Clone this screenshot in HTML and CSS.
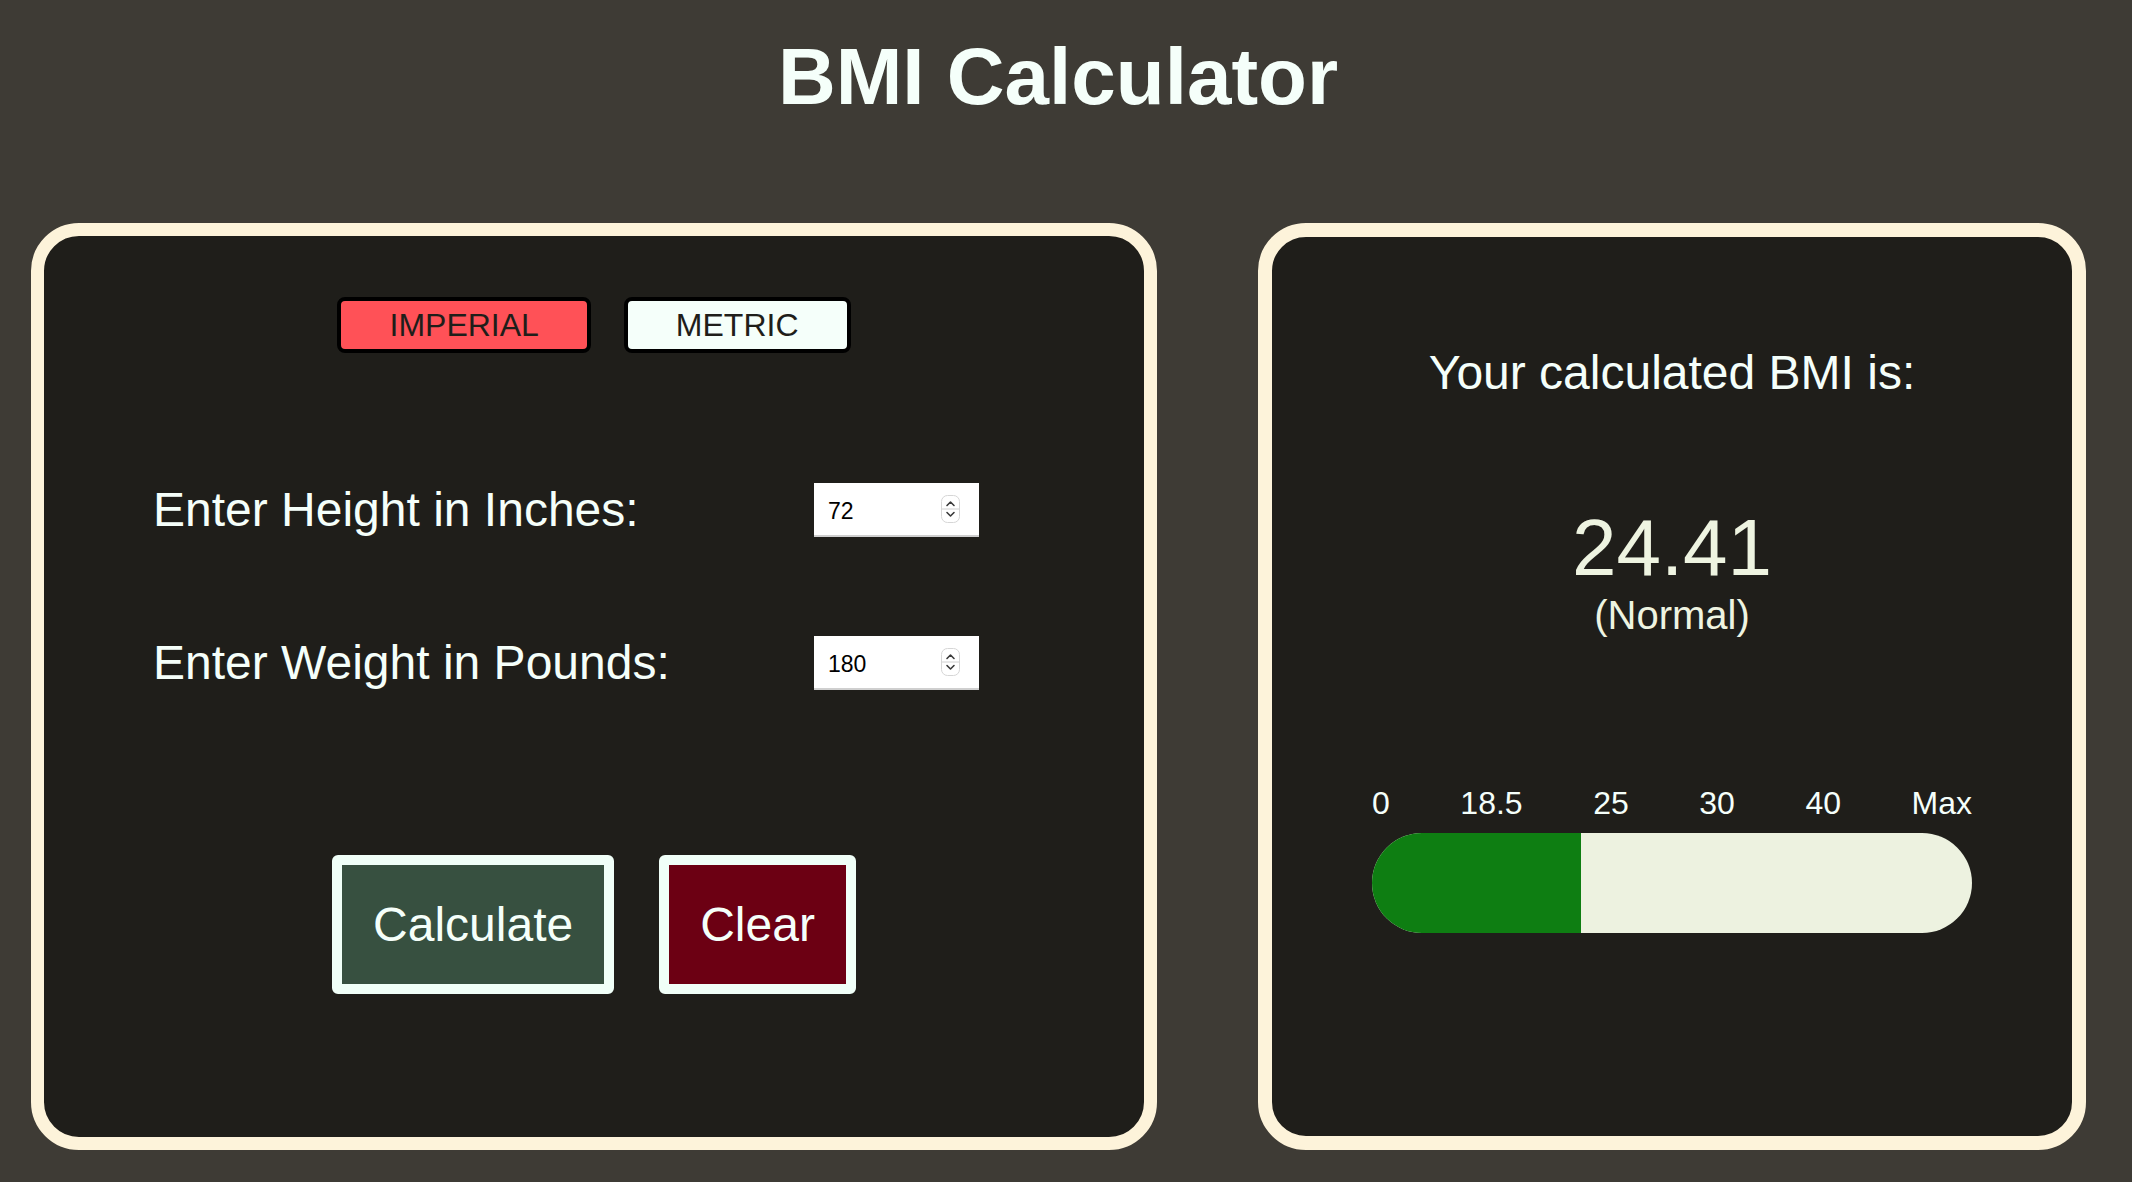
FILE: index.html
```html
<!DOCTYPE html>
<html lang="en">
<head>
<meta charset="utf-8">
<title>BMI Calculator</title>
<link rel="stylesheet" href="styles.css">
</head>
<body>
<header class="header">
  <h1 class="title">BMI Calculator</h1>
</header>
<main class="cards">
  <section class="card card-form">
    <div class="toggles">
      <button class="toggle toggle-active" type="button">IMPERIAL</button>
      <button class="toggle" type="button">METRIC</button>
    </div>
    <div class="form">
      <label class="field-label" for="h">Enter Height in Inches:</label>
      <div class="num">
        <input class="num-input" id="h" type="text" value="72">
        <svg class="spin" width="19" height="28" viewBox="0 0 19 28" aria-hidden="true">
          <rect x="0.5" y="0.5" width="18" height="27" rx="6" fill="#fff" stroke="#d6d6d6"/>
          <line x1="1" y1="14" x2="18" y2="14" stroke="#d0d0d0" stroke-width="1"/>
          <polyline points="6,10.5 9.5,7 13,10.5" fill="none" stroke="#3a3a3a" stroke-width="1.6" stroke-linecap="round" stroke-linejoin="round"/>
          <polyline points="6,17.5 9.5,21 13,17.5" fill="none" stroke="#3a3a3a" stroke-width="1.6" stroke-linecap="round" stroke-linejoin="round"/>
        </svg>
      </div>
      <label class="field-label" for="w">Enter Weight in Pounds:</label>
      <div class="num">
        <input class="num-input" id="w" type="text" value="180">
        <svg class="spin" width="19" height="28" viewBox="0 0 19 28" aria-hidden="true">
          <rect x="0.5" y="0.5" width="18" height="27" rx="6" fill="#fff" stroke="#d6d6d6"/>
          <line x1="1" y1="14" x2="18" y2="14" stroke="#d0d0d0" stroke-width="1"/>
          <polyline points="6,10.5 9.5,7 13,10.5" fill="none" stroke="#3a3a3a" stroke-width="1.6" stroke-linecap="round" stroke-linejoin="round"/>
          <polyline points="6,17.5 9.5,21 13,17.5" fill="none" stroke="#3a3a3a" stroke-width="1.6" stroke-linecap="round" stroke-linejoin="round"/>
        </svg>
      </div>
    </div>
    <div class="actions">
      <button class="action action-calc" type="button">Calculate</button>
      <button class="action action-clear" type="button">Clear</button>
    </div>
  </section>
  <section class="card card-result">
    <p class="result-caption">Your calculated BMI is:</p>
    <p class="result-value">24.41</p>
    <p class="result-class">(Normal)</p>
    <div class="scale">
      <span>0</span>
      <span>18.5</span>
      <span>25</span>
      <span>30</span>
      <span>40</span>
      <span>Max</span>
    </div>
    <div class="bar">
      <div class="bar-fill" style="width: 209px"></div>
    </div>
  </section>
</main>
</body>
</html>
```
FILE: styles.css
```css
* {
  box-sizing: border-box;
}

html, body {
  margin: 0;
  padding: 0;
}

body {
  background: #3e3b35;
  font-family: "Liberation Sans", Arial, sans-serif;
  color: #f5fffa;
  width: 2132px;
  height: 1182px;
  overflow: hidden;
}

.header {
  padding-top: 31px;
  padding-right: 16px;
  display: flex;
  justify-content: center;
}

.title {
  margin: 0;
  font-size: 80px;
  line-height: 92px;
  font-weight: 700;
  color: #f5fffa;
}

.cards {
  display: flex;
  gap: 101px;
  padding-left: 31px;
  margin-top: 100px;
}

.card {
  height: 927px;
  border: 13px solid #fdf3da;
  border-radius: 48px;
  background: #1f1e1a;
  display: flex;
  flex-direction: column;
}

.card-form {
  width: 1126px;
  padding-top: 61px;
}

.card-result {
  width: 828px;
  border-width: 14px;
  padding-top: 108px;
  align-items: center;
}

/* toggles */
.toggles {
  display: flex;
  justify-content: center;
  gap: 33px;
}

.toggle {
  height: 56px;
  padding: 0 48px;
  border: 4px solid #000;
  border-radius: 8px;
  background: #f5fffa;
  color: #1f1e1a;
  font-family: "Liberation Sans", Arial, sans-serif;
  font-size: 32px;
  line-height: 36px;
}

.toggle-active {
  background: #ff5157;
}

/* form */
.form {
  margin-top: 130px;
  margin-left: 109px;
  display: grid;
  grid-template-columns: 661px 165px;
  row-gap: 99px;
  align-items: center;
}

.field-label {
  font-size: 48px;
  line-height: 54px;
  color: #f5fffa;
}

.num {
  height: 54px;
  background: #fff;
  border-bottom: 2px solid #cfcfcf;
  display: flex;
  align-items: center;
  padding: 0 19px 0 14px;
}

.num-input {
  flex: 1;
  min-width: 0;
  border: 0;
  outline: 0;
  background: transparent;
  padding: 4px 0 0;
  font-family: "Liberation Sans", Arial, sans-serif;
  font-size: 23px;
  color: #000;
}

.spin {
  display: block;
  flex: none;
}

/* actions */
.actions {
  margin-top: 165px;
  display: flex;
  justify-content: center;
  gap: 45px;
}

.action {
  height: 139px;
  padding: 0 31px;
  border: 10px solid #f0fff8;
  border-radius: 6px;
  color: #f5fffa;
  font-family: "Liberation Sans", Arial, sans-serif;
  font-size: 48px;
  line-height: 56px;
}

.action-calc {
  background: #375040;
}

.action-clear {
  background: #6c0013;
}

/* result */
.result-caption {
  margin: 0;
  font-size: 48px;
  line-height: 56px;
  color: #f5fffa;
}

.result-value {
  margin: 107px 0 0;
  font-size: 80px;
  line-height: 80px;
  color: #eef4e1;
}

.result-class {
  margin: 7px 0 0;
  font-size: 40px;
  line-height: 40px;
  color: #eef4e1;
}

.scale {
  margin-top: 152px;
  width: 600px;
  display: flex;
  justify-content: space-between;
  font-size: 32px;
  line-height: 32px;
  color: #f5fffa;
}

.bar {
  margin-top: 14px;
  width: 600px;
  height: 100px;
  border-radius: 50px;
  background: #edf2e0;
  overflow: hidden;
  display: flex;
}

.bar-fill {
  height: 100%;
  background: #0e7e12;
}
```
